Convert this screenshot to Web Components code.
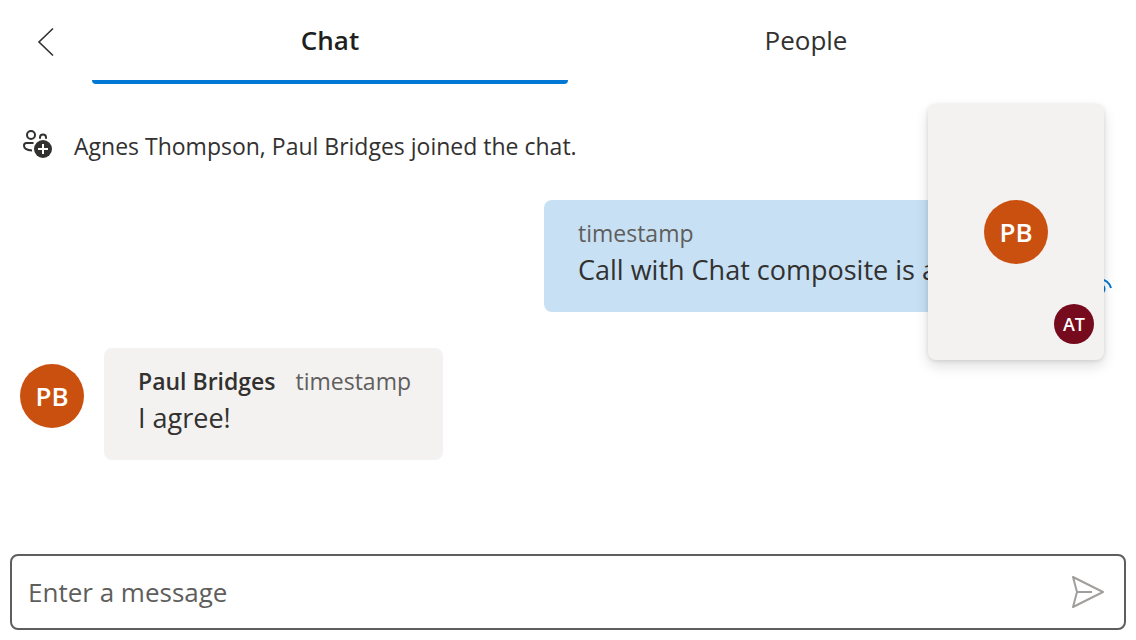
<!DOCTYPE html>
<html lang="en">
<head>
<meta charset="utf-8">
<meta name="viewport" content="width=device-width, initial-scale=1">
<title>Chat</title>
<style>
  body {
    margin: 0;
    background: #fff;
    color: #323130;
    font-family: "Open Sans", "Noto Sans", sans-serif;
    --text-s: 23px;
    --text-m: 27px;
    --text-input: 26px;
    --muted: #605e5c;
    --accent: #0078d4;
    --surface: #f3f2f1;
  }
</style>
</head>
<body>
<chat-pane>
  <chat-tabs slot="header"></chat-tabs>
  <system-notice>Agnes Thompson, Paul Bridges joined the chat.</system-notice>
  <chat-message mine time="timestamp">Call with Chat composite is awesome!</chat-message>
  <chat-message author="Paul Bridges" initials="PB" time="timestamp">I agree!</chat-message>
  <call-preview slot="overlay"></call-preview>
  <message-composer slot="footer"></message-composer>
</chat-pane>

<script>
  class ShadowElement extends HTMLElement {
    connectedCallback() {
      if (this.shadowRoot) return;
      this.attachShadow({ mode: "open" }).innerHTML = this.render();
    }
  }

  class ChatPane extends ShadowElement {
    render() {
      return `<style>
        :host { display: flex; flex-direction: column; min-height: 100vh; position: relative; }
        main { flex: 1; display: flex; flex-direction: column; padding: 38px 20px 20px; }
      </style>
      <slot name="header"></slot><main><slot></slot></main>
      <slot name="footer"></slot><slot name="overlay"></slot>`;
    }
  }

  class ChatTabs extends ShadowElement {
    render() {
      return `<style>
        :host { display: block; }
        nav { display: grid; grid-template-columns: 92px 1fr 92px; height: 84px; }
        [role=tablist] { display: grid; grid-template-columns: 1fr 1fr; }
        button { border: 0; padding: 0; margin: 0; background: none; font: inherit; color: inherit; }
        .back { display: grid; place-items: center; }
        [role=tab] { box-sizing: border-box; font-size: var(--text-input); line-height: 40px;
          border-bottom: 4px solid transparent; border-radius: 0 0 4px 4px; }
        [aria-selected=true] { font-weight: 600; color: #201f1e; border-color: var(--accent); }
      </style>
      <nav>
        <button class="back" aria-label="Back">
          <svg width="32" height="32" viewBox="0 0 32 32" fill="none" stroke="#323130" stroke-width="1.6"><path d="M23 2.5 9 16l14 13.500"/></svg>
        </button>
        <div role="tablist">
          <button role="tab" aria-selected="true">Chat</button>
          <button role="tab" aria-selected="false">People</button>
        </div>
      </nav>`;
    }
  }

  class SystemNotice extends ShadowElement {
    render() {
      return `<style>
        :host { display: flex; align-items: center; gap: 20px; font-size: var(--text-s); line-height: 48px; margin-bottom: 30px; }
        svg { flex: none; }
      </style>
      <svg width="34" height="38" viewBox="0 0 34 38" fill="none" stroke="#323130" stroke-width="2" aria-hidden="true">
        <circle cx="11" cy="8" r="4"/>
        <path d="M20 11.800v-1.300a3 3 0 0 1 6 0v1.300"/>
        <path d="M13.500 16H6.500a2.500 2.500 0 0 0-2.500 2.500c0 3.200 3 4.800 8 4.900"/>
        <circle cx="23" cy="22" r="9" fill="#323130" stroke="none"/>
        <path d="M23 17v10M18 22h10" stroke="#fff"/>
      </svg>
      <span><slot></slot></span>`;
    }
  }

  class UserAvatar extends ShadowElement {
    render() {
      return `<style>
        :host { display: grid; place-items: center; flex: none; width: 64px; height: 64px; border-radius: 50%;
          background: #ca5010; color: #fff; font-size: var(--text-input); font-weight: 600; line-height: 1; }
        :host([small]) { width: 40px; height: 40px; background: #750b1c; font-size: 18px; }
      </style><span><slot></slot></span>`;
    }
  }

  class ChatMessage extends ShadowElement {
    render() {
      const mine = this.hasAttribute("mine");
      const author = this.getAttribute("author");
      const avatar = mine ? "" : `<user-avatar>${this.getAttribute("initials")}</user-avatar>`;
      const status = mine ? `<svg width="32" height="32" viewBox="0 0 32 32" fill="none" stroke="#0078d4" stroke-width="2" role="img" aria-label="Seen"><path d="M5 16a11.300 11.300 0 0 1 22 0"/><circle cx="16" cy="17" r="4.500"/></svg>` : "";
      return `<style>
        :host { display: flex; align-items: center; gap: 20px; margin-bottom: 36px; }
        :host([mine]) { justify-content: flex-end; gap: 0; }
        user-avatar { align-self: flex-start; margin-top: 16px; }
        article { box-sizing: border-box; min-height: 112px; padding: 15px 32px 23px 34px; border-radius: 8px; background: var(--surface); }
        :host([mine]) article { background: #c7e0f4; min-width: 540px; }
        header { display: flex; gap: 20px; font-size: var(--text-s); line-height: 36px; }
        strong { font-weight: 600; }
        time { color: var(--muted); }
        p { margin: 0; font-size: var(--text-m); line-height: 38px; }
        svg { margin-top: 72px; align-self: flex-start; }
      </style>
      ${avatar}
      <article>
        <header>${author ? `<strong>${author}</strong>` : ""}<time>${this.getAttribute("time")}</time></header>
        <p><slot></slot></p>
      </article>${status}`;
    }
  }

  class CallPreview extends ShadowElement {
    render() {
      return `<style>
        :host { position: absolute; top: 104px; right: 32px; width: 176px; height: 256px; display: grid; place-items: center;
          background: var(--surface); border-radius: 8px; box-shadow: 0 6px 14px rgba(0,0,0,.13), 0 1px 4px rgba(0,0,0,.11); }
        user-avatar[small] { position: absolute; right: 10px; bottom: 16px; }
      </style>
      <user-avatar>PB</user-avatar><user-avatar small>AT</user-avatar>`;
    }
  }

  class MessageComposer extends ShadowElement {
    render() {
      return `<style>
        :host { display: block; padding: 0 10px 10px; }
        form { box-sizing: border-box; display: flex; align-items: center; height: 76px; border: 2px solid var(--muted);
          border-radius: 8px; padding: 0 16px; }
        input { flex: 1; min-width: 0; border: 0; outline: 0; padding: 0; background: none; font: inherit;
          font-size: var(--text-input); line-height: 40px; color: inherit; }
        input::placeholder { color: var(--muted); opacity: 1; }
        button { display: grid; border: 0; padding: 0; background: none; }
      </style>
      <form>
        <input type="text" aria-label="Enter a message" placeholder="Enter a message">
        <button type="button" aria-label="Send">
          <svg width="40" height="40" viewBox="0 0 40 40" fill="none" stroke="#a19f9d" stroke-width="2" stroke-linejoin="round"><path d="M5 5 35 20 5 35l4-15zM9 20h15"/></svg>
        </button>
      </form>`;
    }
  }

  customElements.define("user-avatar", UserAvatar);
  customElements.define("chat-tabs", ChatTabs);
  customElements.define("system-notice", SystemNotice);
  customElements.define("chat-message", ChatMessage);
  customElements.define("call-preview", CallPreview);
  customElements.define("message-composer", MessageComposer);
  customElements.define("chat-pane", ChatPane);
</script>
</body>
</html>
